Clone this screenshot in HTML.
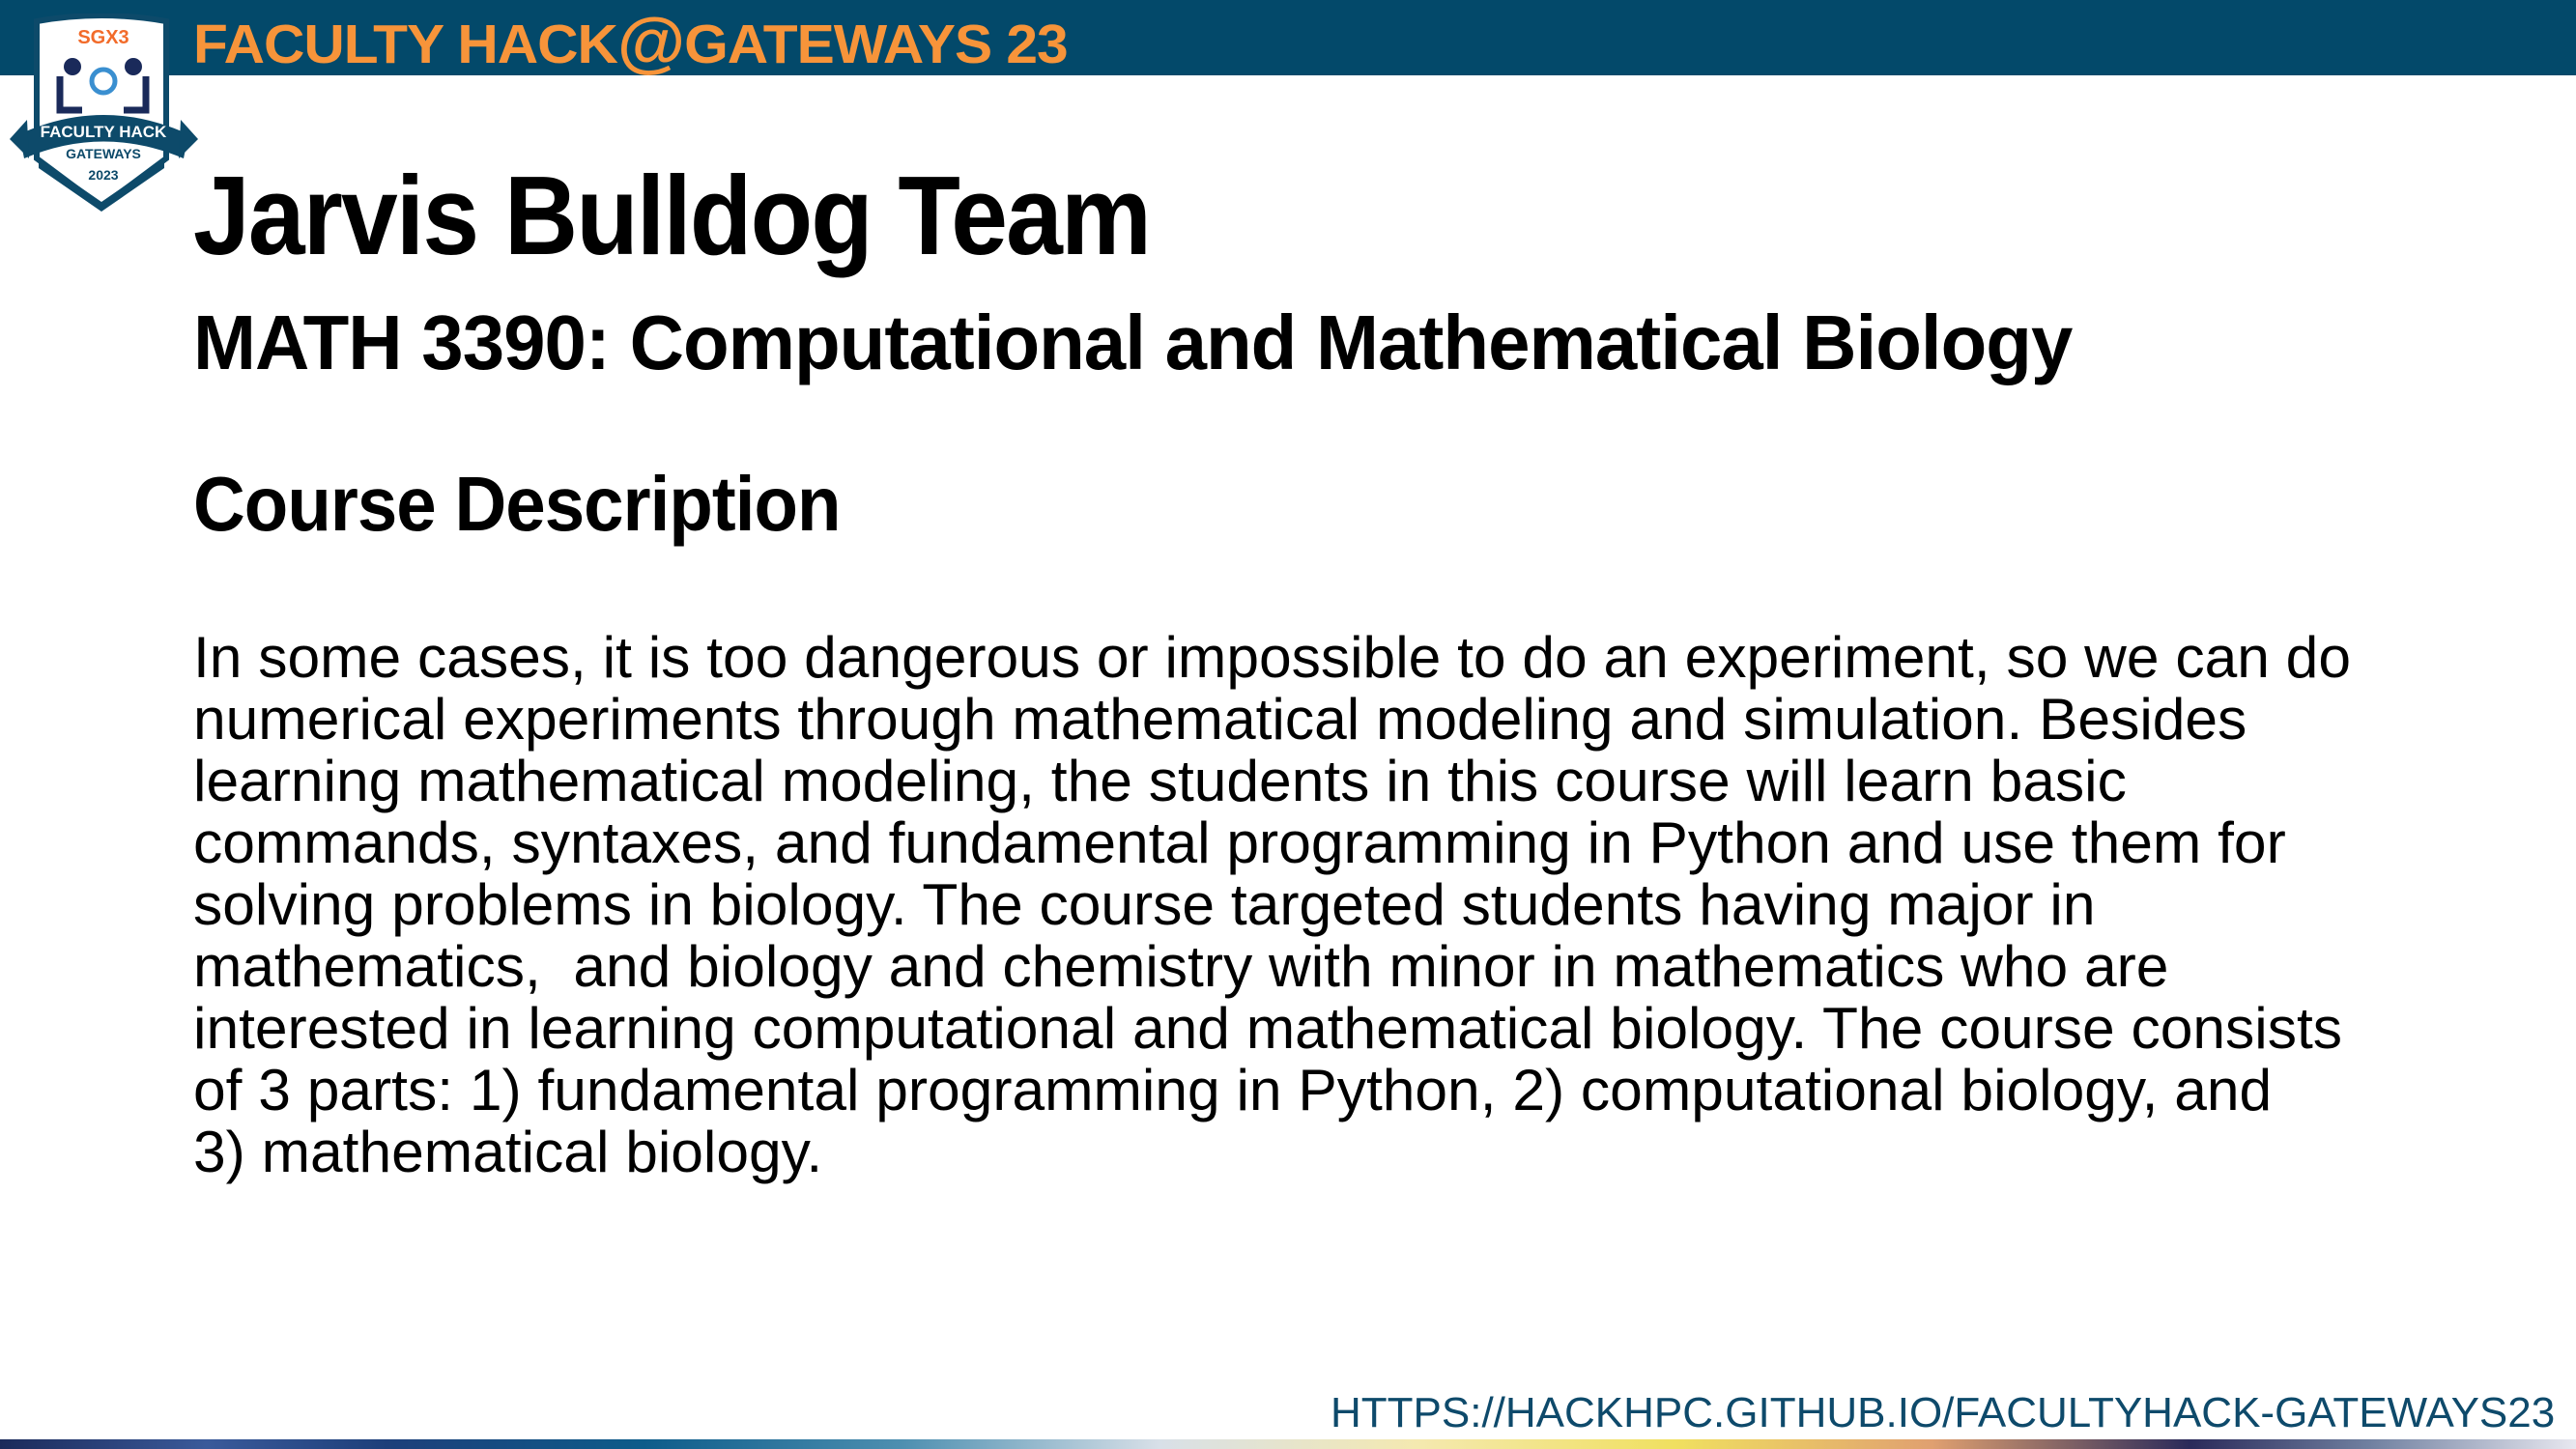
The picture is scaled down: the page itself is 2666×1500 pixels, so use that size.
<!DOCTYPE html>
<html><head><meta charset="utf-8"><style>
html,body{margin:0;padding:0}
body{width:2666px;height:1500px;position:relative;overflow:hidden;background:#fff;font-family:"Liberation Sans",sans-serif;color:#000}
.bar{position:absolute;left:0;top:0;width:2666px;height:78px;background:#03496a}
.htxt{position:absolute;left:200px;top:1px;font-size:57px;font-weight:bold;color:#f7943a;white-space:nowrap;letter-spacing:-1px;transform:scaleX(1.03);transform-origin:left}
.t{position:absolute;left:200px;white-space:nowrap;font-weight:bold;transform-origin:left top}
.body{position:absolute;left:200px;top:648px;font-size:60.5px;line-height:64px;white-space:nowrap;transform-origin:left top}
.url{position:absolute;left:1377px;top:1438px;font-size:44px;color:#0e4a6b;white-space:nowrap;letter-spacing:0px}
.stripe{position:absolute;left:0;top:1490px;width:2666px;height:10px;background:linear-gradient(90deg,#1b2a5a 0%,#3a5a9a 8%,#1d3f7a 15%,#0d5c8a 25%,#4d8fb0 35%,#d8e0e8 45%,#f4e9b0 55%,#f0e060 65%,#e0a070 75%,#2a2a5a 85%,#7080a0 92%,#e8e8f0 100%)}
</style></head><body>
<div class="bar"></div>
<div class="htxt">FACULTY HACK<span style="font-size:70px;position:relative;top:2px">@</span>GATEWAYS 23</div>
<svg style="position:absolute;left:0;top:14px" width="215" height="206" viewBox="0 0 215 206">
 <path d="M38 8 Q105 -4 172 8 L172 150 L105 200 L38 150 Z" fill="#fff" stroke="#0d4a6a" stroke-width="6"/>
 <path d="M20 125 Q107 85 195 125 L190 150 Q107 115 25 150 Z" fill="#0d4a6a"/>
 <path d="M10 130 L28 110 L30 150 Z M205 130 L187 110 L185 150 Z" fill="#0d4a6a"/>
 <path d="M40 150 L40 160 L105 205 L170 160 L170 150 L105 195 Z" fill="#0d4a6a"/>
 <text x="107" y="31" font-size="20" font-weight="bold" fill="#f26b2a" text-anchor="middle" font-family="Liberation Sans">SGX3</text>
 <circle cx="75" cy="55" r="9" fill="#1a2a5a"/><circle cx="138" cy="55" r="9" fill="#1a2a5a"/>
 <path d="M62 65 L62 100 L85 100 M151 65 L151 100 L128 100" stroke="#1a2a5a" stroke-width="7" fill="none"/>
 <circle cx="107" cy="70" r="12" fill="none" stroke="#3a8fd0" stroke-width="5"/>
 <text x="107" y="128" font-size="17" font-weight="bold" fill="#fff" text-anchor="middle" font-family="Liberation Sans">FACULTY HACK</text>
 <text x="107" y="150" font-size="14" font-weight="bold" fill="#0d4a6a" text-anchor="middle" font-family="Liberation Sans">GATEWAYS</text>
 <text x="107" y="172" font-size="14" font-weight="bold" fill="#0d4a6a" text-anchor="middle" font-family="Liberation Sans">2023</text>
</svg>
<div class="t" style="top:158px;font-size:116px;line-height:130px;letter-spacing:-2px;transform:scaleX(0.91)">Jarvis Bulldog Team</div>
<div class="t" style="top:310px;font-size:80px;line-height:90px;letter-spacing:-1px;transform:scaleX(0.975)">MATH 3390: Computational and Mathematical Biology</div>
<div class="t" style="top:477px;font-size:80px;line-height:90px;letter-spacing:-1px;transform:scaleX(0.93)">Course Description</div>
<div class="body">In some cases, it is too dangerous or impossible to do an experiment, so we can do<br>numerical experiments through mathematical modeling and simulation. Besides<br>learning mathematical modeling, the students in this course will learn basic<br>commands, syntaxes, and fundamental programming in Python and use them for<br>solving problems in biology. The course targeted students having major in<br>mathematics,&nbsp; and biology and chemistry with minor in mathematics who are<br>interested in learning computational and mathematical biology. The course consists<br>of 3 parts: 1) fundamental programming in Python, 2) computational biology, and<br>3) mathematical biology.</div>
<div class="url">HTTPS://HACKHPC.GITHUB.IO/FACULTYHACK-GATEWAYS23</div>
<div class="stripe"></div>
</body></html>
